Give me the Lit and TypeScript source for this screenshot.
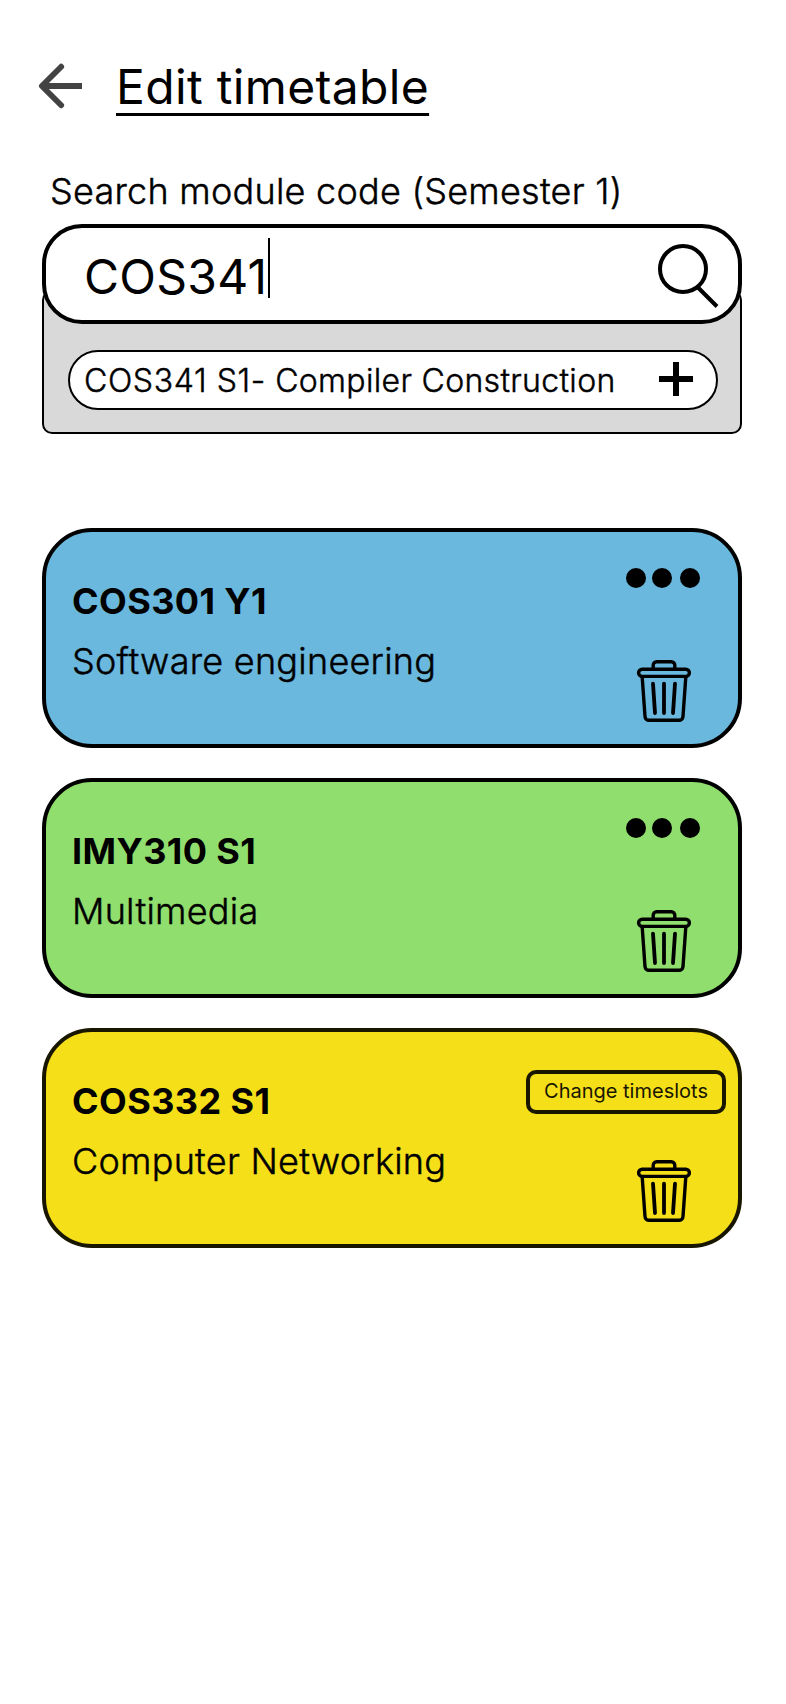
import { LitElement, html, svg, css } from "lit";
import { customElement, property } from "lit/decorators.js";
import { classMap } from "lit/directives/class-map.js";

interface Module {
  code: string;
  name: string;
  tone: "blue" | "green" | "yellow";
  changing?: boolean;
}

const MODULES: Module[] = [
  { code: "COS301 Y1", name: "Software engineering", tone: "blue" },
  { code: "IMY310 S1", name: "Multimedia", tone: "green" },
  { code: "COS332 S1", name: "Computer Networking", tone: "yellow", changing: true },
];

@customElement("module-card")
export class ModuleCard extends LitElement {
  @property({ attribute: false }) module!: Module;

  static styles = css`
    :host { display: block; }
    .card {
      box-sizing: border-box;
      display: flex;
      justify-content: space-between;
      height: 220px;
      border: 4px solid #000;
      border-radius: 50px;
      color: #000;
    }
    .blue { background: #6ab8dd; }
    .green { background: #90de6d; }
    .yellow { background: #f5df19; border-color: #191600; }
    .info { padding: 47px 0 0 26px; font-size: 36px; line-height: 44px; }
    .code { font-weight: 700; letter-spacing: 0.4px; }
    .name {
      margin-top: 16px;
      font-weight: 300;
      letter-spacing: 0.25px;
      -webkit-text-stroke: 0.45px currentColor;
    }
    .actions { display: flex; flex-direction: column; align-items: flex-end; padding-right: 38px; }
    .dots { display: block; margin-top: 36px; }
    .bin { display: block; margin: 71px 8px 0 0; }
    .change {
      box-sizing: border-box;
      width: 200px;
      height: 44px;
      margin: 38px -26px 0 0;
      padding: 0 0 2px;
      border: 4px solid #191600;
      border-radius: 10px;
      background: none;
      color: #191600;
      font: 20px/32px Inter, sans-serif;
      text-align: center;
    }
    .change + .bin { margin-top: 45px; }
  `;

  render() {
    const m = this.module;
    return html`
      <article class=${classMap({ card: true, [m.tone]: true })}>
        <div class="info">
          <div class="code">${m.code}</div>
          <div class="name">${m.name}</div>
        </div>
        <div class="actions">
          ${m.changing
            ? html`<button class="change">Change timeslots</button>`
            : html`<svg class="dots" width="74" height="20" viewBox="0 0 74 20">
                ${[10, 36, 64].map((x) => svg`<circle cx=${x} cy="10" r="10" />`)}
              </svg>`}
          <svg class="bin" width="56" height="64" viewBox="0 0 56 64" fill="none" stroke="#000"
            stroke-width="3.4" stroke-linecap="round" stroke-linejoin="round">
            <path d="M17.2 9.5V6.2a3.5 3.5 0 0 1 3.5-3.5h14.6a3.5 3.5 0 0 1 3.5 3.5V9.5" />
            <rect x="2.6" y="10.2" width="50.8" height="7.2" rx="3.6" />
            <path d="M6.2 18 9 57.5a4 4 0 0 0 4 3.8h30a4 4 0 0 0 4-3.8L49.8 18" />
            <path d="M17 24.6 19 54M28 24.6V54M39 24.6 37 54" stroke-width="3.8" />
          </svg>
        </div>
      </article>
    `;
  }
}

@customElement("app-root")
export class AppRoot extends LitElement {
  static styles = css`
    :host {
      display: block;
      box-sizing: border-box;
      min-height: 1704px;
      padding: 58px 44px 0 42px;
      background: #fff;
      color: #000;
      font-family: Inter, sans-serif;
    }
    .header { display: flex; margin-left: -4px; }
    .back { display: block; margin-top: 5px; }
    h1 {
      margin: 0 0 0 34px;
      font-size: 48px;
      font-weight: 400;
      line-height: 58px;
      letter-spacing: 0.34px;
      text-decoration: underline;
      text-decoration-skip-ink: none;
      text-decoration-thickness: 3.4px;
      text-underline-offset: 9px;
    }
    .label {
      margin: 53px 0 0 8px;
      font-size: 36px;
      font-weight: 300;
      line-height: 44px;
      letter-spacing: 0.25px;
      -webkit-text-stroke: 0.45px currentColor;
    }
    .search {
      position: relative;
      z-index: 1;
      box-sizing: border-box;
      display: flex;
      height: 100px;
      margin-top: 11px;
      padding-left: 38px;
      border: 4px solid #000;
      border-radius: 40px;
      background: #fff;
    }
    .query { margin-top: 20px; font-size: 48px; line-height: 58px; letter-spacing: 0.25px; }
    .caret { width: 2px; height: 60px; margin: 10px 0 0 0.8px; background: #000; }
    .lens { display: block; margin: 14px 18px 0 auto; }
    .results {
      box-sizing: border-box;
      height: 144px;
      margin-top: -34px;
      padding: 58px 22px 0 24px;
      border: 2px solid #000;
      border-radius: 10px;
      background: #d9d9d9;
    }
    .result {
      box-sizing: border-box;
      display: flex;
      align-items: center;
      justify-content: space-between;
      height: 60px;
      padding: 0 23px 0 14px;
      border: 2px solid #000;
      border-radius: 30px;
      background: #fff;
      font-size: 32px;
      font-weight: 300;
      line-height: 38px;
      letter-spacing: 0.32px;
      -webkit-text-stroke: 0.45px currentColor;
    }
    .title { margin-top: 2px; }
    .title-code { letter-spacing: 0.62px; }
    .plus { display: block; margin-bottom: 2px; }
    .modules { display: grid; gap: 30px; margin-top: 94px; }
  `;

  render() {
    return html`
      <header class="header">
        <svg class="back" width="44" height="46" viewBox="0 0 44 46" fill="none" stroke="#434343" stroke-width="5.8">
          <path d="M44 23H4" />
          <path d="M23.2 3.7 3.9 23l19.3 19.3" stroke-linecap="round" stroke-linejoin="round" />
        </svg>
        <h1>Edit timetable</h1>
      </header>
      <div class="label">Search module code (Semester 1)</div>
      <div class="search">
        <span class="query">COS341</span><span class="caret"></span>
        <svg class="lens" width="62" height="66" viewBox="0 0 62 66" fill="none" stroke="#000" stroke-width="4">
          <circle cx="25" cy="27" r="23" />
          <path d="M40 45.5 59 64.5" />
        </svg>
      </div>
      <div class="results">
        <div class="result">
          <span class="title"><span class="title-code">COS341 S1-</span> Compiler Construction</span>
          <svg class="plus" width="34" height="34" viewBox="0 0 34 34">
            <path d="M14 0h6v14h14v6H20v14h-6V20H0v-6h14z" />
          </svg>
        </div>
      </div>
      <section class="modules">
        ${MODULES.map((m) => html`<module-card .module=${m}></module-card>`)}
      </section>
    `;
  }
}
